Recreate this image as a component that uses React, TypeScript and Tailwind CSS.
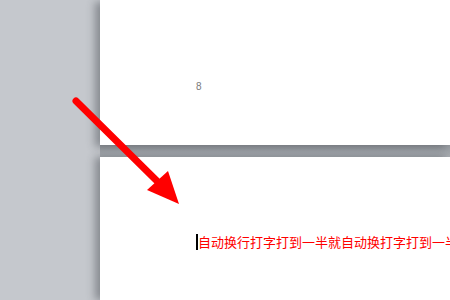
export default function App() {
    return (
        <div className="relative h-[300px] w-[450px] overflow-hidden bg-[#c5c8cd]">
            <div className="flex h-full pl-[100px]">
                <div className="flex w-full flex-col bg-[#a3a7ac]">
                    {/* previous page, footer area */}
                    <div className="relative h-[145px] bg-white shadow-[-5px_2px_8px_rgba(60,64,70,0.45)]">
                        <div
                            className="absolute left-[96px] top-[79px] text-[10px] text-[#7a7a7a]"
                            style={{ fontFamily: '"Liberation Sans", Arial, sans-serif' }}
                        >
                            8
                        </div>
                    </div>
                    <div className="h-[12px] bg-gradient-to-b from-[#95999e] to-[#a9adb2]" />
                    {/* current page */}
                    <div className="flex-1 overflow-hidden bg-white pl-[96px] pt-[77px] shadow-[-5px_0_8px_rgba(60,64,70,0.45)]">
                        <div
                            className="flex items-center whitespace-nowrap text-[13px] leading-[16px] text-[#ff0000]"
                            style={{ fontFamily: '"Noto Sans CJK SC", "Noto Sans", sans-serif' }}
                        >
                            <span className="h-[16px] w-[2px] shrink-0 bg-black" />
                            <span className="shrink-0">自动换行打字打到一半就自动换打字打到一半</span>
                        </div>
                    </div>
                </div>
            </div>
            <svg className="absolute left-0 top-0" width="450" height="300" viewBox="0 0 450 300">
                <line x1="76" y1="101" x2="158" y2="182" stroke="#ff0000" strokeWidth="7" strokeLinecap="round" />
                <polygon points="147,190 168,171 179,204" fill="#ff0000" />
            </svg>
        </div>
    );
}
